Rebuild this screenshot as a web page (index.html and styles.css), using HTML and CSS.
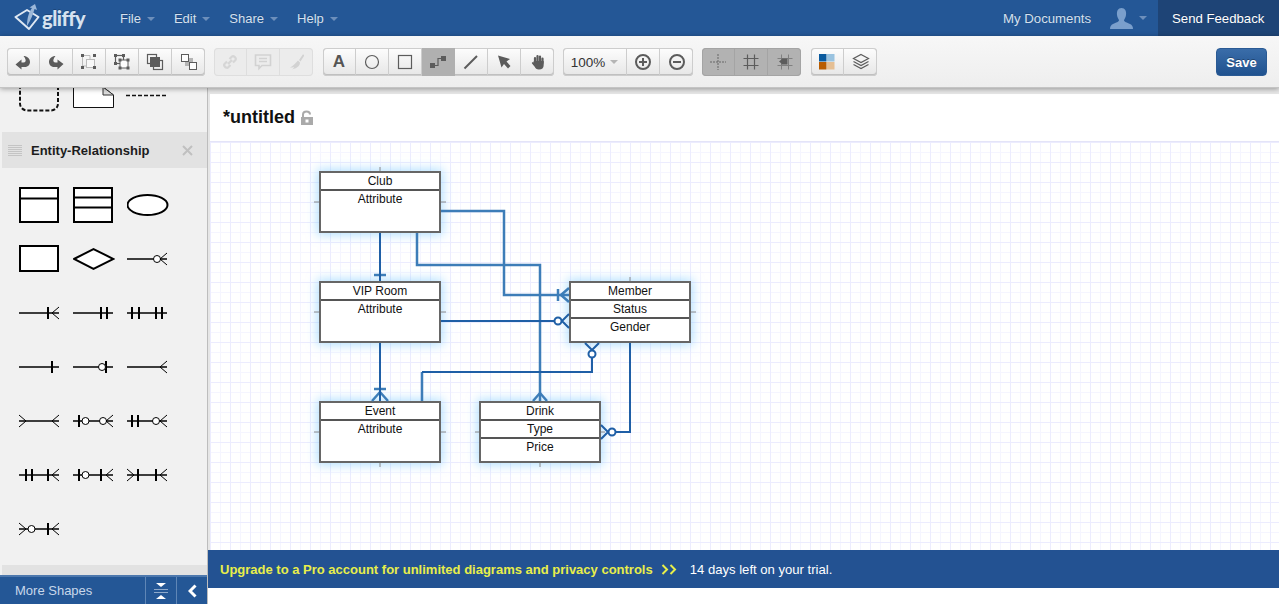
FILE: index.html
```html
<!doctype html>
<html>
	<head>
		<title>Gliffy</title>
		<link rel="stylesheet" href="styles.css">
	</head>
	<body>
		<svg class="defs" width="0" height="0">
			<defs>
				<path id="line" d="M0 20H40"/>
				<path id="crow-r" class="thin" d="M33 20L40 14M33 20L40 26"/>
				<path id="crow-l" class="thin" d="M7 20L0 14M7 20L0 26"/>
				<circle id="dot" class="thin" cx="0" cy="20" r="3.5"/>
				<path id="bar" class="bar" d="M0 14V26"/>
			</defs>
		</svg>

		<div class="topbar">
			<div class="logo">
				<svg width="28" height="30" viewBox="0 0 28 30">
					<path class="logo-diamond" d="M1.5 14L13 7L24.5 14L15 26Z"/>
					<path class="logo-arrow" d="M13 23C13 15 15 9 18 5L15.5 4.5L21 1L23 7L20.5 6C19 11 17 17 13 23Z"/>
				</svg>
				<span class="logo-text">gliffy</span>
			</div>
			<div class="menu">File<i class="caret"></i></div>
			<div class="menu">Edit<i class="caret"></i></div>
			<div class="menu">Share<i class="caret"></i></div>
			<div class="menu">Help<i class="caret"></i></div>
			<div class="topbar-right">
				<div class="docs">My Documents</div>
				<div class="avatar">
					<svg width="23" height="21" viewBox="0 0 23 21">
						<path d="M11.5 0C15 0 16.5 3 16 7C15.7 9.5 14.5 11 14 12C14 14 17 14.5 20 16C22 17 23 18.5 23 21H0C0 18.5 1 17 3 16C6 14.5 9 14 9 12C8.5 11 7.3 9.5 7 7C6.5 3 8 0 11.5 0Z"/>
					</svg>
					<i class="caret"></i>
				</div>
				<div class="feedback">Send Feedback</div>
			</div>
		</div>

		<div class="toolbar">
			<div class="group">
				<button class="tool">
					<svg class="ico" viewBox="0 0 18 18"><path class="solid" d="M7.5 16.5L1.5 11.5L7.5 6.5V9.5H9.5C11.5 9.5 12 8 11.5 6.5C11.2 5.5 10.5 4 9.5 3C13 3 16 5.5 16 9C16 12 13.5 14 10.5 14H7.5Z"/></svg>
				</button>
				<button class="tool">
					<svg class="ico" viewBox="0 0 18 18"><path class="solid" d="M10.5 16.5L16.5 11L10.5 6.5V9.5H8.5C6.5 9.5 6 8 6.5 6.5C6.8 5.5 7.5 4 8.5 3C5 3 2 5.5 2 9C2 12 4.5 14 7.5 14H10.5Z"/></svg>
				</button>
				<button class="tool">
					<svg class="ico" viewBox="0 0 18 18">
						<path class="faint" d="M2.5 2.5H10V6M2.5 2.5V13H6"/>
						<rect class="pale-box" x="6.5" y="6.5" width="8" height="8"/>
						<path class="solid" d="M1 1h3v3h-3zM13 1h3v3h-3zM1 13h3v3h-3zM13 13h3v3h-3z"/>
					</svg>
				</button>
				<button class="tool">
					<svg class="ico" viewBox="0 0 18 18">
						<rect class="outline" x="2.5" y="2.5" width="8" height="8"/>
						<rect class="white-box" x="7" y="7" width="8" height="8"/>
						<path class="solid" d="M1 1h3v3h-3zM9 1h3v3h-3zM1 9h3v3h-3zM5.5 5.5h3v3h-3zM13.5 5.5h3v3h-3zM5.5 13.5h3v3h-3zM13.5 13.5h3v3h-3z"/>
					</svg>
				</button>
				<button class="tool">
					<svg class="ico" viewBox="0 0 18 18">
						<rect class="outline" x="1.5" y="1.5" width="9" height="9"/>
						<rect class="outline" x="7.5" y="7.5" width="9" height="9"/>
						<rect class="solid" x="4" y="4" width="10" height="10"/>
					</svg>
				</button>
				<button class="tool">
					<svg class="ico" viewBox="0 0 18 18">
						<rect class="pale-solid" x="5" y="5" width="8" height="8"/>
						<rect class="white-box" x="1.5" y="1.5" width="7" height="7"/>
						<rect class="white-box" x="9.5" y="9.5" width="7" height="7"/>
					</svg>
				</button>
			</div>

			<div class="group disabled">
				<button class="tool">
					<svg class="ico" viewBox="0 0 18 18"><path class="fat" d="M7 11L11 7M6 8.5L3.5 11C2 12.5 5.5 16 7 14.5L9.5 12M8.5 6L11 3.5C12.5 2 16 5.5 14.5 7L12 9.5"/></svg>
				</button>
				<button class="tool">
					<svg class="ico" viewBox="0 0 18 18"><path class="fat-thin" d="M1.5 2H16.5V12.5H8L5 15.5V12.5H1.5Z"/><path class="fat-thin" d="M5 5.5H13M5 8.5H13"/></svg>
				</button>
				<button class="tool">
					<svg class="ico" viewBox="0 0 18 18"><path class="soft" d="M11 7L14.5 2C15 1 16.5 2 16 3L12.5 8.5ZM10 7.5L12 9.5C12 12 10 15 4 16.5C5.5 15.5 6 14.5 6 14C5 14.5 3.5 14.5 2 14.5C5 13 7.5 10 10 7.5Z"/></svg>
				</button>
			</div>

			<div class="group wide">
				<button class="tool tool-letter">A</button>
				<button class="tool">
					<svg class="ico" viewBox="0 0 18 18"><circle class="outline" cx="9" cy="9" r="6.5"/></svg>
				</button>
				<button class="tool">
					<svg class="ico" viewBox="0 0 18 18"><rect class="outline" x="2.5" y="2.5" width="13" height="13"/></svg>
				</button>
				<button class="tool on">
					<svg class="ico" viewBox="0 0 18 18"><path class="solid" d="M1 10h5v5h-5zM12 3h5v5h-5z"/><path class="outline" d="M5 12.5H9V5.5H13"/></svg>
				</button>
				<button class="tool">
					<svg class="ico" viewBox="0 0 18 18"><path class="fat-dark" d="M2.5 15.5L15 3"/></svg>
				</button>
				<button class="tool">
					<svg class="ico" viewBox="0 0 18 18"><path class="solid" d="M3 2.5L15 6L11.5 8.5L15.5 13L13 15.5L9 11L6.5 14.5Z"/></svg>
				</button>
				<button class="tool">
					<svg class="ico" viewBox="0 0 18 18">
						<path class="finger" d="M6 10V5M8.5 9V3M11 9V3.5M13.5 10V5.5"/>
						<path class="solid" d="M4.8 8H14.7V12C14.7 15 13 16.5 10 16.5C7.5 16.5 6.5 15.5 5.5 13.5L3 10.5C2.5 9.5 3.5 8.8 4.5 9.5Z"/>
					</svg>
				</button>
			</div>

			<div class="group">
				<button class="tool tool-zoom">100%<i class="caret dark"></i></button>
				<button class="tool">
					<svg class="ico" viewBox="0 0 18 18"><circle class="outline-2" cx="9" cy="9" r="7"/><path class="outline-2" d="M5 9H13M9 5V13"/></svg>
				</button>
				<button class="tool">
					<svg class="ico" viewBox="0 0 18 18"><circle class="outline-2" cx="9" cy="9" r="7"/><path class="outline-2" d="M5 9H13"/></svg>
				</button>
			</div>

			<div class="group pressed">
				<button class="tool">
					<svg class="ico" viewBox="0 0 18 18"><path class="dash" d="M1 9H17M9 1V17"/></svg>
				</button>
				<button class="tool">
					<svg class="ico" viewBox="0 0 18 18"><path class="outline" d="M1.5 5.5H16.5M1.5 12.5H16.5M5.5 1.5V16.5M12.5 1.5V16.5"/></svg>
				</button>
				<button class="tool">
					<svg class="ico" viewBox="0 0 18 18"><path class="faint-dark" d="M1.5 5.5H16.5M1.5 12.5H16.5M5.5 1.5V16.5M12.5 1.5V16.5"/><path class="solid" d="M5.5 5.5h6v6h-6zM3 8.5l2.5-2v4z"/></svg>
				</button>
			</div>

			<div class="group wide">
				<button class="tool">
					<svg class="ico" viewBox="0 0 18 18">
						<rect class="c-blue" x="1" y="1" width="7.5" height="7.5"/>
						<rect class="c-sky" x="9" y="1" width="7.5" height="7.5"/>
						<rect class="c-rust" x="1" y="9" width="7.5" height="7.5"/>
						<rect class="c-sand" x="9" y="9" width="7.5" height="7.5"/>
					</svg>
				</button>
				<button class="tool">
					<svg class="ico" viewBox="0 0 18 18">
						<path class="layers" d="M9 1.5L16.5 5.5L9 9.5L1.5 5.5ZM1.5 8.5L9 12.5L16.5 8.5M1.5 11.5L9 15.5L16.5 11.5"/>
					</svg>
				</button>
			</div>

			<button class="save">Save</button>
		</div>

		<div class="main">
			<div class="sidebar">
				<div class="shapes-cut">
					<svg width="205" height="44" viewBox="0 88 205 44">
						<rect class="cut-dash" x="20" y="60" width="38" height="50.5" rx="7"/>
						<path class="cut-note" d="M73.5 80H103V87L113.5 95V107.500H73.5Z"/>
						<path class="cut-fold" d="M103 87V95H113.500Z"/>
						<path class="cut-line" d="M126 95.5H168"/>
					</svg>
				</div>

				<div class="panel-head">
					<svg class="grip" width="14" height="11" viewBox="0 0 14 11"><path d="M0 .5H14M0 2.5H14M0 4.5H14M0 6.5H14M0 8.5H14M0 10.5H14"/></svg>
					<span class="panel-title">Entity-Relationship</span>
					<svg class="panel-x" width="11" height="11" viewBox="0 0 11 11"><path d="M1 1L10 10M10 1L1 10"/></svg>
				</div>

				<div class="shapes">
					<svg viewBox="0 0 42 40"><rect class="stencil" x="1" y="3" width="38" height="34"/><path class="stroke2" d="M1 13.5H39"/></svg>
					<svg viewBox="0 0 42 40"><rect class="stencil" x="1" y="3" width="38" height="34"/><path class="stroke2" d="M1 12.5H39M1 22.5H39"/></svg>
					<svg viewBox="0 0 42 40"><ellipse class="stencil" cx="20.5" cy="20" rx="20" ry="10"/></svg>

					<svg viewBox="0 0 42 40"><rect class="stencil" x="1" y="7" width="38" height="25"/></svg>
					<svg viewBox="0 0 42 40"><path class="stencil" d="M1 20L20.5 10L40.5 20L20.5 30Z"/></svg>
					<svg viewBox="0 0 42 40"><use href="#line" class="wire"/><use href="#dot" x="30"/><use href="#crow-r"/></svg>

					<svg viewBox="0 0 42 40"><use href="#line" class="wire"/><use href="#bar" x="29"/><use href="#crow-r"/></svg>
					<svg viewBox="0 0 42 40"><use href="#line" class="wire"/><use href="#bar" x="28"/><use href="#bar" x="34"/></svg>
					<svg viewBox="0 0 42 40"><use href="#line" class="wire"/><use href="#bar" x="5"/><use href="#bar" x="12"/><use href="#bar" x="29"/><use href="#bar" x="35"/></svg>

					<svg viewBox="0 0 42 40"><use href="#line" class="wire"/><use href="#bar" x="33"/></svg>
					<svg viewBox="0 0 42 40"><use href="#line" class="wire"/><use href="#bar" x="33"/><use href="#dot" x="29"/></svg>
					<svg viewBox="0 0 42 40"><use href="#line" class="wire"/><use href="#crow-r"/></svg>

					<svg viewBox="0 0 42 40"><use href="#line" class="wire"/><use href="#crow-l"/><use href="#crow-r"/></svg>
					<svg viewBox="0 0 42 40"><use href="#line" class="wire"/><use href="#bar" x="6"/><use href="#dot" x="12.5"/><use href="#dot" x="30"/><use href="#crow-r"/></svg>
					<svg viewBox="0 0 42 40"><use href="#line" class="wire"/><use href="#bar" x="5"/><use href="#bar" x="11"/><use href="#dot" x="29"/><use href="#crow-r"/></svg>

					<svg viewBox="0 0 42 40"><use href="#line" class="wire"/><use href="#bar" x="7"/><use href="#bar" x="13"/><use href="#bar" x="29"/><use href="#crow-r"/></svg>
					<svg viewBox="0 0 42 40"><use href="#line" class="wire"/><use href="#bar" x="6"/><use href="#dot" x="12.5"/><use href="#bar" x="28"/><use href="#crow-r"/></svg>
					<svg viewBox="0 0 42 40"><use href="#line" class="wire"/><use href="#crow-l"/><use href="#bar" x="11"/><use href="#bar" x="29"/><use href="#crow-r"/></svg>

					<svg viewBox="0 0 42 40"><use href="#line" class="wire"/><use href="#crow-l"/><use href="#dot" x="12.5"/><use href="#bar" x="29"/><use href="#crow-r"/></svg>
				</div>

				<div class="panel-rest"></div>

				<div class="more">
					<span class="more-label">More Shapes</span>
					<div class="more-btn">
						<svg width="14" height="16" viewBox="0 0 14 16">
							<path class="tri" d="M2 0H12L7 4ZM2 16H12L7 12Z"/>
							<path class="more-lines" d="M0 6.5H14M0 9.5H14"/>
						</svg>
					</div>
					<div class="more-btn">
						<svg width="9" height="14" viewBox="0 0 9 14"><path class="chev" d="M7.5 1.5L2 7L7.5 12.5"/></svg>
					</div>
				</div>
			</div>

			<div class="work">
				<div class="title-bar">
					<span class="doc-title">*untitled</span>
					<svg class="lock" width="14" height="15" viewBox="0 0 14 15">
						<path class="lock-shackle" d="M3 7V4.5C3 2.5 4.5 1.5 6.5 1.5C8.5 1.5 10 2.5 10 4.5"/>
						<path class="lock-body" d="M1 7H13V15H1ZM5.5 9.5V12.5H8.5V9.5Z"/>
					</svg>
				</div>

				<div class="diagram">
					<svg class="wires" viewBox="210 142 1069 408">
						<!-- little handles round each shape -->
						<path class="tick" d="M380 167V171M314 202H319M441 202H446M380 233V237"/>
						<path class="tick" d="M314 312H319M441 312H446"/>
						<path class="tick" d="M630 277V281M691 312H696"/>
						<path class="tick" d="M314 432H319M441 432H446M380 463V467"/>
						<path class="tick" d="M475 432H479M601 432H605M540 463V467"/>

						<!-- soft ones -->
						<path class="link-soft" d="M441 211H504V295H569"/>
						<path class="link-soft" d="M417 233V265H540V401"/>
						<path class="link-soft" d="M422 401V372"/>
						<path class="link-soft" d="M558 289V301M561 295L569 288M561 295L569 302"/>
						<path class="link-soft" d="M540 393L533 401M540 393L547 401"/>
						<path class="link-soft" d="M374 275H386"/>
						<path class="link-soft" d="M374 389H386"/>
						<path class="link-soft" d="M380 392L372 401M380 392L388 401"/>

						<!-- hard ones -->
						<path class="link" d="M380 233V281"/>
						<path class="link" d="M380 343V401"/>
						<path class="link" d="M441 321H554"/>
						<path class="link" d="M422 372H592V358"/>
						<path class="link" d="M630 343V432H616"/>
						<path class="link" d="M562 321L569 314M562 321L569 328"/>
						<path class="link" d="M592 350L585 343M592 350L599 343"/>
						<path class="link" d="M608 432L601 425M608 432L601 439"/>
						<circle class="ring" cx="558" cy="321" r="3.5"/>
						<circle class="ring" cx="592" cy="354" r="3.5"/>
						<circle class="ring" cx="612" cy="432" r="3.5"/>
					</svg>

					<div class="entity club"><div class="row">Club</div><div class="row tall">Attribute</div></div>
					<div class="entity vip"><div class="row">VIP Room</div><div class="row tall">Attribute</div></div>
					<div class="entity event"><div class="row">Event</div><div class="row tall">Attribute</div></div>
					<div class="entity member"><div class="row">Member</div><div class="row">Status</div><div class="row tall">Gender</div></div>
					<div class="entity drink"><div class="row">Drink</div><div class="row">Type</div><div class="row tall">Price</div></div>
				</div>

				<div class="upgrade">
					<span class="upgrade-link">Upgrade to a Pro account for unlimited diagrams and privacy controls</span>
					<svg class="upgrade-arrows" width="16" height="11" viewBox="0 0 16 11"><path d="M1.5 1L6 5.5L1.5 10M9.5 1L14 5.5L9.5 10"/></svg>
					<span class="upgrade-days">14 days left on your trial.</span>
				</div>
				<div class="under"></div>
			</div>
		</div>
	</body>
</html>
```

FILE: styles.css
```css
html, body
{
	margin : 0;
	height : 604px;
	overflow : hidden;
	background-color : #fff;
	font-family : "Liberation Sans", Arial, sans-serif;
	font-size : 13px;
}
.defs
{
	display : block;
	height : 0;
}
.caret
{
	display : inline-block;
	width : 0;
	height : 0;
	margin-left : 6px;
	vertical-align : 2px;
	border-left : 4px solid transparent;
	border-right : 4px solid transparent;
	border-top : 4px solid #6d8fbb;
}
.caret.dark
{
	border-top-color : #b5b5b5;
}

/* top blue bar */
.topbar
{
	display : flex;
	align-items : center;
	height : 36px;
	background-color : #245796;
	color : #d5e0ee;
	text-shadow : 0 -1px 0 rgba(0, 0, 0, 0.2);
}
.logo
{
	display : flex;
	align-items : center;
	width : 120px;
	padding-left : 14px;
	box-sizing : border-box;
}
.logo svg
{
	flex : none;
}
.logo-diamond
{
	fill : none;
	stroke : #dfe8f3;
	stroke-width : 2;
	stroke-linejoin : round;
}
.logo-arrow
{
	fill : #9cb8d9;
}
.logo-text
{
	font-family : "Lato", sans-serif;
	font-weight : 900;
	font-size : 20px;
	letter-spacing : -0.5px;
	color : #d6e2f0;
}
.menu
{
	margin-right : 19px;
}
.topbar-right
{
	display : flex;
	align-items : center;
	height : 100%;
	margin-left : auto;
}
.docs
{
	margin-right : 19px;
	font-size : 13.2px;
}
.avatar
{
	display : flex;
	align-items : center;
	margin-right : 11px;
}
.avatar svg
{
	fill : #7a9fcc;
}
.feedback
{
	display : flex;
	align-items : center;
	height : 100%;
	width : 121px;
	padding-left : 14px;
	box-sizing : border-box;
	background-color : #1e4476;
	color : #fff;
	font-size : 13.2px;
}

/* tool strip */
.toolbar
{
	position : relative;
	z-index : 2;
	display : flex;
	align-items : flex-start;
	gap : 9px;
	height : 52px;
	padding : 12px 12px 0 7px;
	box-sizing : border-box;
	background : linear-gradient(#f7f7f7, #eeeeee);
	border-bottom : 1px solid #c4c4c4;
	box-shadow : 0 1px 5px rgba(0, 0, 0, 0.35);
}
.group
{
	display : flex;
	height : 28px;
	border-radius : 4px;
	background : linear-gradient(#fdfdfd, #e6e6e6);
	box-shadow : inset 0 0 0 1px #cdcdcd, inset 0 -1px 0 1px #c0c0c0;
	overflow : hidden;
}
.wide
{
	margin-left : 1px;
}
.tool
{
	display : flex;
	align-items : center;
	justify-content : center;
	width : 33px;
	height : 28px;
	padding : 0;
	border : 0;
	border-right : 1px solid #cdcdcd;
	background : none;
	font-family : inherit;
	color : #555;
}
.tool:last-child
{
	border-right : 0;
}
.tool-letter
{
	font-weight : bold;
	font-size : 17px;
}
.tool-zoom
{
	width : 64px;
	font-size : 13.5px;
	color : #333;
}
.tool-zoom .caret
{
	margin-left : 5px;
	vertical-align : 1px;
}
.on
{
	background : #b0b0b0;
	border-right-color : #b0b0b0;
}
.pressed
{
	background : #b2b2b2;
	box-shadow : inset 0 0 0 1px #a4a4a4;
}
.pressed .tool
{
	border-right-color : #a4a4a4;
}
.ico
{
	display : block;
	width : 18px;
	height : 18px;
}
.solid
{
	fill : #5c5c5c;
}
.outline
{
	fill : none;
	stroke : #5c5c5c;
	stroke-width : 1.2;
}
.layers
{
	fill : none;
	stroke : #5c5c5c;
	stroke-width : 1.2;
}
.outline-2
{
	fill : none;
	stroke : #5c5c5c;
	stroke-width : 2;
}
.faint
{
	fill : none;
	stroke : #bbb;
	stroke-width : 1;
}
.faint-dark
{
	fill : none;
	stroke : #808080;
	stroke-width : 1;
}
.pale-box
{
	fill : #f8f8f8;
	stroke : #bbb;
	stroke-width : 1;
}
.white-box
{
	fill : #fdfdfd;
	stroke : #5c5c5c;
	stroke-width : 1;
}
.pale-solid
{
	fill : #b5b5b5;
}
.dash
{
	fill : none;
	stroke : #666;
	stroke-width : 1;
	stroke-dasharray : 2 1;
}
.fat
{
	fill : none;
	stroke : #d6d6d6;
	stroke-width : 2.2;
}
.fat-thin
{
	fill : none;
	stroke : #d2d2d2;
	stroke-width : 1.6;
}
.soft
{
	fill : #d2d2d2;
}
.fat-dark
{
	fill : none;
	stroke : #5c5c5c;
	stroke-width : 2;
}
.finger
{
	fill : none;
	stroke : #5c5c5c;
	stroke-width : 2.2;
	stroke-linecap : round;
}
.disabled
{
	background : #ececec;
	box-shadow : inset 0 0 0 1px #dedede;
}
.disabled .tool
{
	border-right-color : #dedede;
}
.c-blue
{
	fill : #0a5a9e;
}
.c-sky
{
	fill : #9ac3e0;
}
.c-rust
{
	fill : #b85c00;
}
.c-sand
{
	fill : #e5bf94;
}
.save
{
	width : 51px;
	height : 28px;
	margin-left : auto;
	padding : 0;
	border : 1px solid #2a5a94;
	border-radius : 4px;
	background : linear-gradient(#3a6da9, #20528f);
	color : #fff;
	font-family : inherit;
	font-weight : bold;
	font-size : 13px;
	text-shadow : 0 -1px 0 rgba(0, 0, 0, 0.3);
}

/* below the strip */
.main
{
	display : flex;
	height : 516px;
	background-color : #e6e6e6;
}
.sidebar
{
	display : flex;
	flex-direction : column;
	flex : none;
	width : 208px;
	box-sizing : border-box;
	background-color : #f1f1f1;
	border-right : 1px solid #bdbdbd;
}
.shapes-cut
{
	flex : none;
	height : 44px;
	overflow : hidden;
}
.shapes-cut svg
{
	display : block;
}
.cut-dash
{
	fill : none;
	stroke : #111;
	stroke-width : 2;
	stroke-dasharray : 4 2;
}
.cut-note
{
	fill : #fff;
	stroke : #111;
	stroke-width : 1;
}
.cut-fold
{
	fill : #ddd;
	stroke : #333;
	stroke-width : 1;
}
.cut-line
{
	fill : none;
	stroke : #111;
	stroke-width : 1.5;
	stroke-dasharray : 4 2;
}
.panel-head
{
	display : flex;
	align-items : center;
	flex : none;
	height : 36px;
	margin-left : 2px;
	padding : 1px 0 0 6px;
	box-sizing : border-box;
	background-color : #e2e2e2;
}
.grip
{
	fill : none;
	stroke : #c4c4c4;
	stroke-width : 1;
}
.panel-title
{
	margin-left : 9px;
	font-weight : bold;
	font-size : 13px;
	color : #1c1c1c;
}
.panel-x
{
	margin-left : auto;
	margin-right : 14px;
	fill : none;
	stroke : #c0c0c0;
	stroke-width : 2;
}
.shapes
{
	display : grid;
	flex : none;
	grid-template-columns : repeat(3, 54px);
	grid-auto-rows : 54px;
	align-items : center;
	height : 397px;
	padding : 10px 0 0 19px;
	box-sizing : border-box;
}
.shapes svg
{
	display : block;
	width : 42px;
	height : 40px;
	stroke : #000;
	fill : none;
}
.stencil
{
	fill : #fff;
	stroke : #000;
	stroke-width : 2;
}
.stroke2
{
	stroke-width : 2;
}
.wire
{
	stroke-width : 1.6;
}
.thin
{
	stroke : #000;
	stroke-width : 1;
	fill : #fff;
}
.bar
{
	stroke : #000;
	stroke-width : 2;
}
.panel-rest
{
	flex : none;
	height : 10px;
	margin-left : 2px;
	background-color : #e2e2e2;
}
.more
{
	display : flex;
	align-items : center;
	flex : none;
	height : 29px;
	box-sizing : border-box;
	background-color : #245796;
	border-top : 2px solid #4d78ad;
	color : #c8d7ea;
}
.more-label
{
	flex : 1;
	padding-left : 15px;
}
.more-btn
{
	display : flex;
	align-items : center;
	justify-content : center;
	width : 31px;
	height : 100%;
	border-left : 1px solid #5f86b6;
	box-sizing : border-box;
}
.tri
{
	fill : #fff;
}
.more-lines
{
	fill : none;
	stroke : #8ea9cb;
	stroke-width : 1;
}
.chev
{
	fill : none;
	stroke : #fff;
	stroke-width : 3;
}

/* drawing area */
.work
{
	display : flex;
	flex-direction : column;
	flex : 1;
	padding-top : 6px;
	margin-left : 2px;
}
.title-bar
{
	display : flex;
	align-items : center;
	flex : none;
	height : 48px;
	padding-left : 13px;
	box-sizing : border-box;
	background-color : #fff;
	border-bottom : 1px solid #e4e4f8;
}
.doc-title
{
	font-weight : bold;
	font-size : 18px;
	color : #111;
}
.lock
{
	margin-left : 5px;
}
.lock-shackle
{
	fill : none;
	stroke : #aaa;
	stroke-width : 2;
}
.lock-body
{
	fill : #aaa;
	fill-rule : evenodd;
}
.diagram
{
	position : relative;
	flex : 1;
	overflow : hidden;
	background-color : #fff;
	background-image :
		linear-gradient(to right, #ececfe 1px, transparent 1px),
		linear-gradient(to bottom, #ececfe 1px, transparent 1px),
		linear-gradient(to right, #f5f5ff 1px, transparent 1px),
		linear-gradient(to bottom, #f5f5ff 1px, transparent 1px);
	background-size : 20px 20px, 20px 20px, 10px 10px, 10px 10px;
}
.wires
{
	position : absolute;
	top : 0;
	left : 0;
	z-index : 2;
	width : 1069px;
	height : 408px;
}
.tick
{
	fill : none;
	stroke : #8a8a8a;
	stroke-width : 1;
}
.link
{
	fill : none;
	stroke : #1f5fa6;
	stroke-width : 2;
}
.link-soft
{
	fill : none;
	stroke : #3d7db8;
	stroke-width : 2.5;
}
.ring
{
	fill : #fff;
	stroke : #1f5fa6;
	stroke-width : 2;
}
.entity
{
	position : absolute;
	z-index : 1;
	width : 122px;
	height : 62px;
	box-sizing : border-box;
	background-color : #fff;
	border : 2px solid #666;
	box-shadow : 0 0 10px 2px rgba(130, 205, 255, 0.6);
	color : #111;
	font-size : 12px;
	text-align : center;
}
.club
{
	left : 109px;
	top : 29px;
}
.vip
{
	left : 109px;
	top : 139px;
}
.event
{
	left : 109px;
	top : 259px;
}
.member
{
	left : 359px;
	top : 139px;
}
.drink
{
	left : 269px;
	top : 259px;
}
.row
{
	height : 18px;
	box-sizing : border-box;
	border-bottom : 2px solid #555;
	line-height : 17px;
}
.row.tall
{
	border-bottom : 0;
}

/* trial banner */
.upgrade
{
	display : flex;
	align-items : center;
	flex : none;
	height : 38px;
	margin-left : -2px;
	padding-left : 12px;
	background-color : #235292;
}
.upgrade-link
{
	font-weight : bold;
	font-size : 13px;
	color : #e8ee4a;
}
.upgrade-arrows
{
	margin-left : 8px;
	fill : none;
	stroke : #e8ee4a;
	stroke-width : 2;
}
.upgrade-days
{
	margin-left : 13px;
	color : #fff;
	font-size : 13.1px;
}
.under
{
	flex : none;
	height : 16px;
	margin-left : -2px;
	background-color : #fff;
}
```
